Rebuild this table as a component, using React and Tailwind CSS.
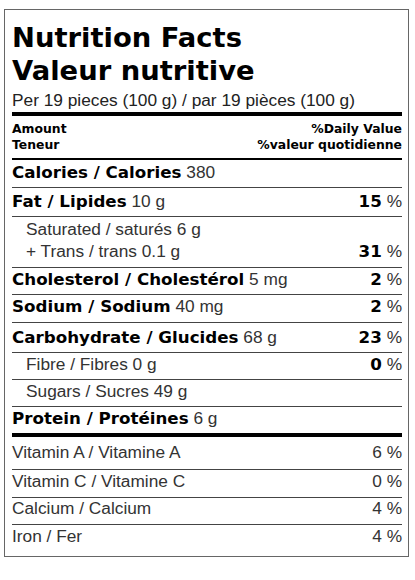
import React from "react";

const heavy = "font-['DejaVu_Sans',sans-serif] font-bold text-black";

const nutrients = [
  { h: 28, pt: 2, label: "Calories / Calories", amount: "380" },
  { h: 29, pt: 3, label: "Fat / Lipides", amount: "10 g", dv: "15" },
  { h: 51, pt: 1, sat: true, dv: "31" },
  { h: 27, pt: 1, label: "Cholesterol / Cholestérol", amount: "5 mg", dv: "2" },
  { h: 28, pt: 1, label: "Sodium / Sodium", amount: "40 mg", dv: "2" },
  { h: 30, pt: 4, label: "Carbohydrate / Glucides", amount: "68 g", dv: "23" },
  { h: 27, pt: 1, sub: "Fibre / Fibres 0 g", dv: "0" },
  { h: 27, pt: 1, sub: "Sugars / Sucres 49 g" },
  { h: 30, pt: 1, label: "Protein / Protéines", amount: "6 g", thick: true },
];

const vitamins = [
  { h: 33, pt: 5, label: "Vitamin A / Vitamine A", dv: "6 %" },
  { h: 28, pt: 1, label: "Vitamin C / Vitamine C", dv: "0 %" },
  { h: 27, pt: 0, label: "Calcium / Calcium", dv: "4 %" },
  { h: 31, pt: 1, label: "Iron / Fer", dv: "4 %", last: true },
];

function Percent({ value }) {
  if (!value) return null;
  return (
    <span className="whitespace-nowrap">
      <span className={`${heavy} text-[16.7px]`}>{value}</span>
      <span className="text-[#333]"> %</span>
    </span>
  );
}

function NutrientRow({ row }) {
  const border = row.thick ? "border-b-4 border-black" : "border-b border-[#444]";

  if (row.sat) {
    return (
      <div className={`${border} leading-[22px] pl-[14px] text-[#333]`} style={{ height: row.h, paddingTop: row.pt }}>
        <div>Saturated / saturés 6 g</div>
        <div className="flex justify-between">
          <span>+ Trans / trans 0.1 g</span>
          <Percent value={row.dv} />
        </div>
      </div>
    );
  }

  return (
    <div
      className={`${border} flex justify-between items-start leading-[20px] ${row.sub ? "pl-[14px]" : ""}`}
      style={{ height: row.h, paddingTop: row.pt }}
    >
      {row.sub ? (
        <span className="text-[#333]">{row.sub}</span>
      ) : (
        <span className="whitespace-nowrap">
          <span className={`${heavy} text-[16.7px]`}>{row.label}</span>
          <span className="text-[#333]"> {row.amount}</span>
        </span>
      )}
      <Percent value={row.dv} />
    </div>
  );
}

export default function App() {
  return (
    <div className="w-[415px] h-[580px] bg-white pt-[9px] pl-[4px] font-['Liberation_Sans',Arial,sans-serif] text-[17.3px]">
      <div className="w-[405px] h-[548px] border border-[#666] pl-[7px] pr-[6px]">
        {/* title */}
        <div className={`${heavy} pt-[11px] text-[27.4px] leading-[33px]`}>
          <div>Nutrition Facts</div>
          <div>Valeur nutritive</div>
        </div>
        <div className="mt-[3px] leading-[20px] text-[#222]">
          Per 19 pieces (100 g) / par 19 pièces (100 g)
        </div>
        <div className="mt-[2px] h-[4px] bg-black" />

        {/* column headings */}
        <div className={`${heavy} pt-[5px] flex justify-between text-[12.4px] leading-[16px]`}>
          <div>
            <div>Amount</div>
            <div>Teneur</div>
          </div>
          <div className="text-right">
            <div>%Daily Value</div>
            <div>%valeur quotidienne</div>
          </div>
        </div>
        <div className="mt-[5px] h-[2px] bg-black" />

        {nutrients.map((row, i) => (
          <NutrientRow key={i} row={row} />
        ))}

        {vitamins.map((v) => (
          <div
            key={v.label}
            className={`flex justify-between items-start leading-[20px] text-[#333] ${v.last ? "" : "border-b border-[#444]"}`}
            style={{ height: v.h, paddingTop: v.pt }}
          >
            <span>{v.label}</span>
            <span>{v.dv}</span>
          </div>
        ))}
      </div>
    </div>
  );
}
